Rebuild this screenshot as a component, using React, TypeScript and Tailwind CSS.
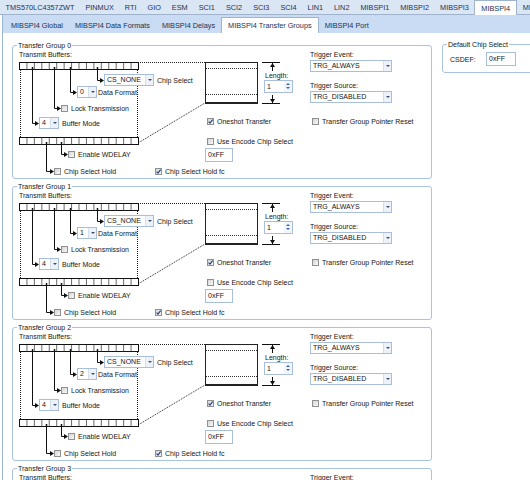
import React from 'react'

const MODULES = ['TMS570LC4357ZWT', 'PINMUX', 'RTI', 'GIO', 'ESM', 'SCI1', 'SCI2', 'SCI3', 'SCI4', 'LIN1', 'LIN2', 'MIBSPI1', 'MIBSPI2', 'MIBSPI3', 'MIBSPI4', 'MIBSPI5']
const PAGES = ['MIBSPI4 Global', 'MIBSPI4 Data Formats', 'MIBSPI4 Delays', 'MIBSPI4 Transfer Groups', 'MIBSPI4 Port']

function Check({ checked = false }: { checked?: boolean }) {
  return (
    <span className="relative inline-block w-[7px] h-[7px] shrink-0 border border-[#909090] bg-linear-to-br from-[#d6d6d6] to-[#f8f8f8]">
      {checked && (
        <svg viewBox="0 0 7 7" className="absolute -inset-px w-[7px] h-[7px]">
          <path d="M1.6 3.6 L3 5.1 L5.6 1.6" stroke="#1f3f7a" strokeWidth="1.1" fill="none" />
        </svg>
      )}
    </span>
  )
}

function CheckRow({ label, checked, className = '' }: { label: string; checked?: boolean; className?: string }) {
  return (
    <div className={`flex items-center gap-[3px] h-[9px] whitespace-nowrap ${className}`}>
      <Check checked={checked} />
      <span>{label}</span>
    </div>
  )
}

function Combo({ value, className }: { value: string; className: string }) {
  return (
    <div className={`flex h-[12px] shrink-0 border border-[#a9bedb] bg-white ${className}`}>
      <span className="flex-1 pl-[2px] leading-[10px] overflow-hidden whitespace-nowrap">{value}</span>
      <span className="w-[8px] border-l border-[#d5dfec] bg-[#edf2f9] flex items-center justify-center">
        <svg width="4" height="2" viewBox="0 0 4 2">
          <path d="M0 0h4L2 2z" fill="#3a4f6b" />
        </svg>
      </span>
    </div>
  )
}

function TextBox({ value, className }: { value: string; className: string }) {
  return (
    <div className={`h-[14px] border border-[#a9bedb] bg-white pl-[2px] leading-[12px] ${className}`}>{value}</div>
  )
}

function Spin() {
  return (
    <div className="flex w-[29px] h-[13px] border border-[#a9bedb] bg-white">
      <span className="flex-1 pl-[2px] leading-[11px]">1</span>
      <span className="w-[8px] flex flex-col items-center justify-center gap-[2px] bg-[#f2f6fb]">
        <svg width="4" height="2" viewBox="0 0 4 2"><path d="M0 2h4L2 0z" fill="#2f63b6" /></svg>
        <svg width="4" height="2" viewBox="0 0 4 2"><path d="M0 0h4L2 2z" fill="#2f63b6" /></svg>
      </span>
    </div>
  )
}

function Lead({ x, y0, y1, x1 }: { x: number; y0: number; y1: number; x1: number }) {
  return (
    <g>
      <path d={`M${x + 0.5} ${y0} V${y1 + 0.5} H${x1 - 3}`} stroke="#111" fill="none" />
      <path d={`M${x1 - 4} ${y1 - 2} L${x1} ${y1 + 0.5} L${x1 - 4} ${y1 + 3} Z`} fill="#111" />
      <rect x={x - 0.25} y={y0 - 3} width="1.5" height="2.5" fill="#111" />
    </g>
  )
}

function Register({ y }: { y: number }) {
  const cells = Array.from({ length: 15 }, (_, i) => 7.5 + ((i + 1) * 119) / 16)
  return (
    <g>
      <rect x="7.5" y={y + 0.5} width="119" height="7" fill="white" stroke="#111" />
      {cells.map(cx => (
        <path key={cx} d={`M${cx} ${y + 1} V${y + 7.5}`} stroke="#444" strokeWidth="0.8" />
      ))}
    </g>
  )
}

function BufferDiagram({ format }: { format: string }) {
  return (
    <div className="relative w-[193px] shrink-0">
      <svg className="absolute inset-0" width="193" height="134">
        <g stroke="#222" strokeDasharray="1 1" fill="none">
          <path d="M8.5 25 V92" />
          <path d="M125.5 25 V92" />
          <path d="M126 17.5 H193" />
          <path d="M126 98 L193 58" />
        </g>
        <Register y={17} />
        <Register y={92} />
        <Lead x={85} y0={25} y1={35} x1={92} />
        <Lead x={58} y0={25} y1={47} x1={65} />
        <Lead x={42} y0={25} y1={63} x1={49} />
        <Lead x={20} y0={25} y1={78} x1={27} />
        <Lead x={49} y0={100} y1={109} x1={56} />
        <Lead x={34} y0={100} y1={126} x1={42} />
      </svg>
      <span className="absolute left-[7px] top-[4.5px] whitespace-nowrap">Transmit Buffers:</span>
      <div className="absolute left-[92px] top-[29px] flex items-center gap-[3px] whitespace-nowrap">
        <Combo value="CS_NONE" className="w-[50px]" />
        <span>Chip Select</span>
      </div>
      <div className="absolute left-[65px] top-[41px] flex items-center gap-[1px]">
        <Combo value={format} className="w-[20px]" />
        <span className="w-[39px] overflow-hidden whitespace-nowrap">Data Format</span>
      </div>
      <CheckRow label="Lock Transmission" className="absolute left-[49px] top-[58.5px]" />
      <div className="absolute left-[27px] top-[72px] flex items-center gap-[3px] whitespace-nowrap">
        <Combo value="4" className="w-[20px]" />
        <span>Buffer Mode</span>
      </div>
      <CheckRow label="Enable WDELAY" className="absolute left-[56px] top-[104.5px]" />
      <CheckRow label="Chip Select Hold" className="absolute left-[42px] top-[121.5px]" />
      <CheckRow label="Chip Select Hold fc" checked className="absolute left-[143px] top-[121.5px]" />
    </div>
  )
}

function LengthBlock() {
  return (
    <div className="flex mt-[17px] h-[41px]">
      <div className="w-[53px] h-[42px] border border-[#222] border-b-2 flex flex-col">
        <div className="h-[6px] border-b border-dotted border-[#333]" />
        <div className="flex-1" />
        <div className="h-[8px] border-t border-dotted border-[#333]" />
      </div>
      <div className="relative w-[40px]">
        <svg className="absolute inset-0" width="40" height="42">
          <path d="M4 0.5 H22 M4 41.5 H22 M14.5 1 V10 M14.5 33 V41" stroke="#111" fill="none" />
          <path d="M12 5 L14.5 1 L17 5 Z M12 37 L14.5 41 L17 37 Z" fill="#111" />
        </svg>
        <span className="absolute left-[7px] top-[8.5px] bg-white">Length:</span>
        <div className="absolute left-[6px] top-[17.5px]">
          <Spin />
        </div>
      </div>
    </div>
  )
}

function TransferGroup({ index }: { index: number }) {
  return (
    <div className="relative h-[134px] shrink-0 border border-[#a9c3e3] rounded-[3px]">
      <span className="absolute left-[4px] -top-[5px] bg-white px-[1px] whitespace-nowrap">Transfer Group {index}</span>
      <div className="-m-px flex h-[134px]">
        <BufferDiagram format={String(index)} />
        <div className="w-[105px] shrink-0 flex flex-col">
          <LengthBlock />
          <CheckRow label="Oneshot Transfer" checked className="ml-[2px] mt-[13.5px]" />
          <CheckRow label="Use Encode Chip Select" className="ml-[2px] mt-[11.5px]" />
          <TextBox value="0xFF" className="w-[28px] mt-[1.5px]" />
        </div>
        <div className="flex flex-col pt-[4.5px]">
          <span>Trigger Event:</span>
          <Combo value="TRG_ALWAYS" className="w-[82px] mt-[1.5px]" />
          <span className="mt-[8.5px]">Trigger Source:</span>
          <Combo value="TRG_DISABLED" className="w-[82px] mt-[1.5px]" />
          <CheckRow label="Transfer Group Pointer Reset" className="ml-[2px] mt-[13.5px]" />
        </div>
      </div>
    </div>
  )
}

export default function App() {
  return (
    <div className="w-[530px] h-[480px] overflow-hidden bg-white flex flex-col font-['Liberation_Sans',Arial,sans-serif] text-[7px] leading-[9px] text-[#161616]">
      <div className="h-[15px] shrink-0 flex bg-[#dbe6f4] border-b border-[#9fb3cd] text-[#1d3252] text-[7.3px]">
        {MODULES.map(m => (
          <div
            key={m}
            className={`h-[15px] flex items-center whitespace-nowrap ${
              m === 'MIBSPI4' ? 'bg-white border-x border-t border-[#9fb3cd] -mb-px px-[6px]' : 'px-[5.5px]'
            }`}
          >
            {m}
          </div>
        ))}
      </div>
      <div className="flex-1 flex flex-col ml-[2px] border-l border-[#9cb6d8]">
        <div className="h-[18px] shrink-0 flex items-end pl-[2px] bg-[#c9dcf3] text-[#1d3252] text-[7.3px]">
          {PAGES.map(p => (
            <div
              key={p}
              className={`px-[6px] h-[16px] flex items-center whitespace-nowrap ${
                p === 'MIBSPI4 Transfer Groups' ? 'bg-white border-x border-t border-[#9fb3cd]' : ''
              }`}
            >
              {p}
            </div>
          ))}
        </div>
        <div className="flex-1 flex gap-[10px] pl-[9px] pt-[12px]">
          <div className="w-[420px] shrink-0 flex flex-col gap-[7px]">
            {[0, 1, 2, 3].map(i => (
              <TransferGroup key={i} index={i} />
            ))}
          </div>
          <div className="relative w-[100px] h-[29px] shrink-0 -mt-[1.5px] border border-[#a9c3e3] rounded-[3px] flex items-center">
            <span className="absolute left-[4px] -top-[5px] bg-white px-[1px] whitespace-nowrap">Default Chip Select</span>
            <span className="ml-[7px] mt-[2px] w-[36px]">CSDEF:</span>
            <TextBox value="0xFF" className="w-[30px] mt-[2px]" />
          </div>
        </div>
      </div>
    </div>
  )
}
